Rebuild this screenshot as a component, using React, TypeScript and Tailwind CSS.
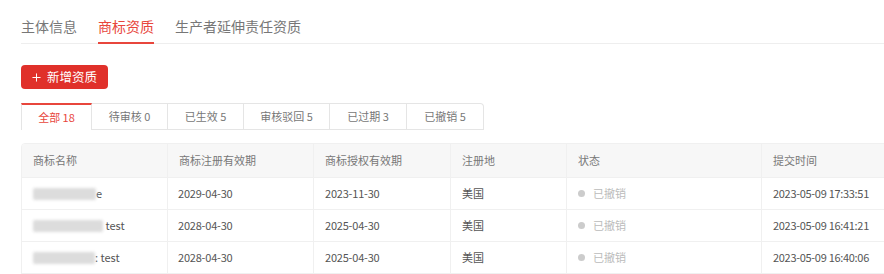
import React from "react";

const font = { fontFamily: '"Noto Sans CJK SC", "Noto Sans", sans-serif' };

const subTabs = [
  { label: "全部 18", w: "w-[71px]" },
  { label: "待审核 0", w: "w-[76px]" },
  { label: "已生效 5", w: "w-[76px]" },
  { label: "审核驳回 5", w: "w-[86px]" },
  { label: "已过期 3", w: "w-[77px]" },
  { label: "已撤销 5", w: "w-[77px]" },
];

const rows = [
  { blur: "w-[63px]", suffix: "e", reg: "2029-04-30", auth: "2023-11-30", time: "2023-05-09 17:33:51" },
  { blur: "w-[70px]", suffix: " test", reg: "2028-04-30", auth: "2025-04-30", time: "2023-05-09 16:41:21" },
  { blur: "w-[62px]", suffix: ": test", reg: "2028-04-30", auth: "2025-04-30", time: "2023-05-09 16:40:06" },
];

const cols = ["w-[146px]", "w-[146px]", "w-[137px]", "w-[116px]", "w-[195px]", "w-[160px]"];

export default function App() {
  return (
    <div className="w-[884px] h-[274px] overflow-hidden bg-white" style={font}>
      <div className="pl-[21px] w-[1000px]">
        {/* top tabs */}
        <div className="flex gap-[21px] h-[44px] items-stretch border-b border-[#eeeeee] w-[900px] pt-[14px]">
          <div className="text-[14px] leading-[24px] text-[#777777]">主体信息</div>
          <div className="text-[14px] leading-[24px] text-[#e8463c] border-b-2 border-[#e8463c] -mb-px">商标资质</div>
          <div className="text-[14px] leading-[24px] text-[#777777]">生产者延伸责任资质</div>
        </div>
        {/* button */}
        <div className="mt-[21px]">
          <button className="h-[24px] w-[87px] rounded-[4px] bg-[#e0302a] text-white text-[12.5px] flex items-center justify-center gap-[6px]">
            <svg width="9" height="9" viewBox="0 0 10 10">
              <path d="M5 0.5V9.5M0.5 5H9.5" stroke="white" strokeWidth="1.1" />
            </svg>
            <span className="leading-[24px]">新增资质</span>
          </button>
        </div>
        {/* sub tabs */}
        <div className="flex mt-[14px] h-[27px]">
          {subTabs.map((t, i) => (
            <div
              key={t.label}
              className={
                i === 0
                  ? `${t.w} flex items-center justify-center text-[11px] text-[#e8463c] border-t-2 border-t-[#e8463c] border-l border-r border-[#e5e5e5]`
                  : `${t.w} flex items-center justify-center text-[11px] text-[#777777] border-t border-r border-b border-[#e5e5e5] ${i === subTabs.length - 1 ? "rounded-tr-[4px]" : ""}`
              }
            >
              {t.label}
            </div>
          ))}
        </div>
        {/* table */}
        <div className="mt-[13px] w-[960px] border border-[#f0f0f0] rounded-t-[4px] overflow-hidden">
          <div className="flex h-[34px] bg-[#f7f7f7] border-b border-[#f0f0f0] text-[11px] text-[#777777]">
            {["商标名称", "商标注册有效期", "商标授权有效期", "注册地", "状态", "提交时间"].map((h, i) => (
              <div key={h} className={`${cols[i]} flex items-center px-[11px] ${i < 5 ? "border-r border-[#f0f0f0]" : ""}`}>
                {h}
              </div>
            ))}
          </div>
          {rows.map((r, ri) => (
            <div key={ri} className="flex h-[32px] border-b border-[#f0f0f0] text-[11px] text-[#555555]">
              <div className={`${cols[0]} flex items-center px-[11px] border-r border-[#f0f0f0]`}>
                <span className={`${r.blur} h-[12px] bg-[#dcdcdc] blur-[1.5px] inline-block rounded-[2px]`} />
                <span className="whitespace-pre">{r.suffix}</span>
              </div>
              <div className={`${cols[1]} flex items-center px-[10px] border-r border-[#f0f0f0] tracking-[-0.2px]`}>{r.reg}</div>
              <div className={`${cols[2]} flex items-center px-[11px] border-r border-[#f0f0f0] tracking-[-0.2px]`}>{r.auth}</div>
              <div className={`${cols[3]} flex items-center px-[11px] border-r border-[#f0f0f0]`}>美国</div>
              <div className={`${cols[4]} flex items-center px-[11px] border-r border-[#f0f0f0] text-[#bbbbbb] gap-[8px]`}>
                <span className="w-[7px] h-[7px] rounded-full bg-[#cccccc] inline-block" />
                已撤销
              </div>
              <div className={`${cols[5]} flex items-center px-[11px] tracking-[-0.3px]`}>{r.time}</div>
            </div>
          ))}
        </div>
      </div>
    </div>
  );
}
